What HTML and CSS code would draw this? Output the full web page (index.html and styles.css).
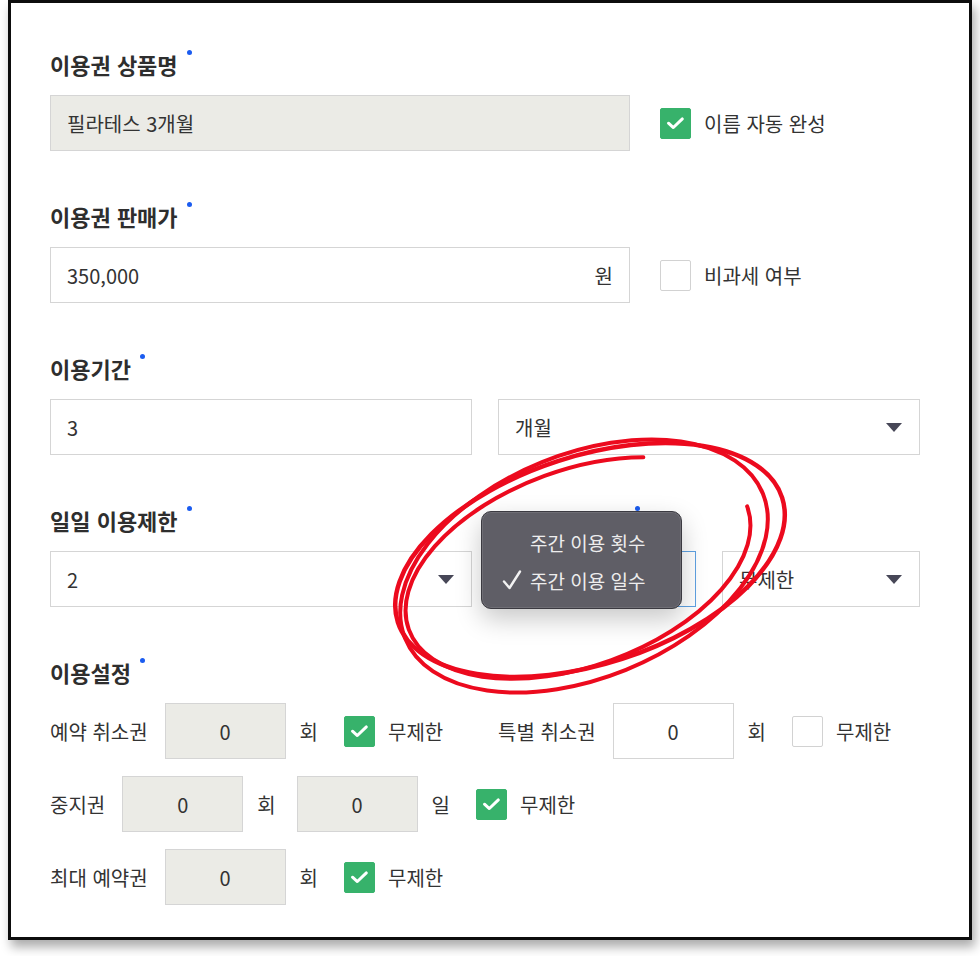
FILE: index.html
```html
<!DOCTYPE html>
<html lang="ko">
<head>
<meta charset="utf-8">
<title>이용권 설정</title>
<link rel="stylesheet" href="styles.css">
</head>
<body>
<div class="card">
  <section class="field">
    <div class="label">이용권 상품명<span class="req"></span></div>
    <div class="row-name">
      <div class="input disabled name-input">필라테스 3개월</div>
      <div class="check-item"><span class="cb cb-on"><svg width="31" height="31" viewBox="0 0 31 31"><path d="M8 15.2 L13.2 19.8 L22.8 10.6" fill="none" stroke="#fff" stroke-width="3.2" stroke-linecap="round" stroke-linejoin="round"/></svg></span><span>이름 자동 완성</span></div>
    </div>
  </section>

  <section class="field">
    <div class="label">이용권 판매가<span class="req"></span></div>
    <div class="row-name">
      <div class="input name-input price"><span>350,000</span><span>원</span></div>
      <div class="check-item"><span class="cb"></span><span>비과세 여부</span></div>
    </div>
  </section>

  <section class="field">
    <div class="label">이용기간<span class="req"></span></div>
    <div class="grid2">
      <div class="input">3</div>
      <div class="input select"><span>개월</span><span class="caret"></span></div>
    </div>
  </section>

  <section class="field grid2">
    <div class="col">
      <div class="label">일일 이용제한<span class="req"></span></div>
      <div class="input select"><span>2</span><span class="caret"></span></div>
    </div>
    <div class="col">
      <div class="label">주간 이용제한<span class="req"></span></div>
      <div class="split">
        <div class="input select focused">
          <span>주간 이용 일수</span><span class="caret"></span>
          <div class="menu">
            <div class="menu-item"><span class="mi-check"></span><span>주간 이용 횟수</span></div>
            <div class="menu-item"><span class="mi-check"><svg width="20" height="20" viewBox="0 0 20 20"><path d="M2 11.5 L7.5 18 L18 1.5" fill="none" stroke="#f2f2f2" stroke-width="2.4" stroke-linecap="round" stroke-linejoin="round"/></svg></span><span>주간 이용 일수</span></div>
          </div>
        </div>
        <div class="input select"><span>무제한</span><span class="caret"></span></div>
      </div>
    </div>
  </section>

  <section class="field last">
    <div class="label">이용설정<span class="req"></span></div>
    <div class="settings">
      <div class="grid2">
        <div class="set-item">
          <span class="set-label">예약 취소권</span>
          <div class="num disabled">0</div>
          <span class="unit">회</span>
          <div class="check-item gap-check"><span class="cb cb-on"><svg width="31" height="31" viewBox="0 0 31 31"><path d="M8 15.2 L13.2 19.8 L22.8 10.6" fill="none" stroke="#fff" stroke-width="3.2" stroke-linecap="round" stroke-linejoin="round"/></svg></span><span>무제한</span></div>
        </div>
        <div class="set-item">
          <span class="set-label">특별 취소권</span>
          <div class="num">0</div>
          <span class="unit">회</span>
          <div class="check-item gap-check"><span class="cb"></span><span>무제한</span></div>
        </div>
      </div>
      <div class="set-item">
        <span class="set-label">중지권</span>
        <div class="num disabled">0</div>
        <span class="unit">회</span>
        <div class="num disabled gap-num">0</div>
        <span class="unit">일</span>
        <div class="check-item gap-check"><span class="cb cb-on"><svg width="31" height="31" viewBox="0 0 31 31"><path d="M8 15.2 L13.2 19.8 L22.8 10.6" fill="none" stroke="#fff" stroke-width="3.2" stroke-linecap="round" stroke-linejoin="round"/></svg></span><span>무제한</span></div>
      </div>
      <div class="set-item">
        <span class="set-label">최대 예약권</span>
        <div class="num disabled">0</div>
        <span class="unit">회</span>
        <div class="check-item gap-check"><span class="cb cb-on"><svg width="31" height="31" viewBox="0 0 31 31"><path d="M8 15.2 L13.2 19.8 L22.8 10.6" fill="none" stroke="#fff" stroke-width="3.2" stroke-linecap="round" stroke-linejoin="round"/></svg></span><span>무제한</span></div>
      </div>
    </div>
  </section>
</div>

<svg class="annot" width="980" height="956" viewBox="0 0 980 956">
  <g fill="none" stroke="#ec0a1e" stroke-linecap="round">
    <ellipse cx="590" cy="560" rx="202" ry="104" transform="rotate(-18 590 560)" stroke-width="4.5"/>
    <ellipse cx="584" cy="566" rx="193" ry="112" transform="rotate(-22 584 566)" stroke-width="4"/>
    <ellipse cx="578" cy="568" rx="180" ry="98" transform="rotate(-20 578 568)" stroke-width="4" stroke-dasharray="770 300"/>
  </g>
</svg>
</body>
</html>
```

FILE: styles.css
```css
* { box-sizing: border-box; }
html, body { margin: 0; padding: 0; background: #fff; }
body {
  font-family: "Noto Sans CJK KR", "Noto Sans", sans-serif;
  color: #333;
  width: 980px;
  height: 956px;
  position: relative;
  overflow: hidden;
}
.card {
  margin-left: 8px;
  width: 964px;
  height: 940px;
  border: 3px solid #0d0d0d;
  background: #fff;
  box-shadow: 3px 7px 10px rgba(0, 0, 0, 0.33);
  padding: 47px 49px 0 39px;
}
.field { margin-bottom: 51px; }
.label {
  font-size: 22px;
  line-height: 28px;
  height: 28px;
  font-weight: 600;
  margin-bottom: 17px;
  color: #2e2e2e;
  white-space: nowrap;
}
.req {
  display: inline-block;
  width: 5px;
  height: 5px;
  border-radius: 50%;
  background: #1b5cf0;
  vertical-align: top;
  margin-left: 9px;
}
.input {
  height: 56px;
  border: 1px solid #d5d5d5;
  background: #fff;
  display: flex;
  align-items: center;
  padding: 0 16px;
  font-size: 20px;
  color: #333;
  white-space: nowrap;
}
.row-name { display: flex; align-items: center; }
.name-input { width: 580px; margin-right: 30px; }
.price { justify-content: space-between; }
.check-item {
  display: flex;
  align-items: center;
  font-size: 20px;
  color: #333;
  white-space: nowrap;
}
.cb {
  width: 31px;
  height: 31px;
  border-radius: 2px;
  border: 1px solid #d2d2d2;
  background: #fff;
  margin-right: 13px;
  display: flex;
  align-items: center;
  justify-content: center;
  flex: none;
}
.cb svg { display: block; }
.cb-on { background: #37b26b; border-color: #37b26b; }
.grid2 {
  display: grid;
  grid-template-columns: 422px 422px;
  column-gap: 26px;
}
.select { justify-content: space-between; padding-right: 17px; }
.caret {
  width: 0;
  height: 0;
  border-left: 8px solid transparent;
  border-right: 8px solid transparent;
  border-top: 9px solid #474757;
  flex: none;
}
.split {
  display: grid;
  grid-template-columns: 198px 198px;
  column-gap: 26px;
}
.focused { border-color: #5fa2e3; position: relative; }
.menu {
  position: absolute;
  left: -18px;
  top: -41px;
  width: 201px;
  height: 98px;
  background: #5f5e66;
  border: 1px solid #3b3a41;
  border-radius: 10px;
  box-shadow: 0 10px 26px rgba(0, 0, 0, 0.22), inset 0 0 0 1px rgba(255, 255, 255, 0.1);
  padding-top: 11px;
  z-index: 2;
}
.menu-item {
  height: 38px;
  display: flex;
  align-items: center;
  padding-left: 20px;
  font-size: 19px;
  color: #ededed;
}
.mi-check { width: 28px; display: flex; align-items: center; }
.mi-check svg { display: block; }
.settings { display: flex; flex-direction: column; gap: 17px; }
.set-item {
  display: flex;
  align-items: center;
  font-size: 20px;
  white-space: nowrap;
}
.set-label { margin-right: 17px; }
.num {
  width: 121px;
  height: 56px;
  border: 1px solid #d5d5d5;
  background: #fff;
  display: flex;
  align-items: center;
  justify-content: center;
  font-size: 20px;
  flex: none;
}
.unit { margin-left: 14px; }
.gap-num { margin-left: 21px; }
.gap-check { margin-left: 26px; }
.input.disabled, .num.disabled { background: #ebebe6; }
.annot {
  position: absolute;
  left: 0;
  top: 0;
  z-index: 3;
  pointer-events: none;
}
```
